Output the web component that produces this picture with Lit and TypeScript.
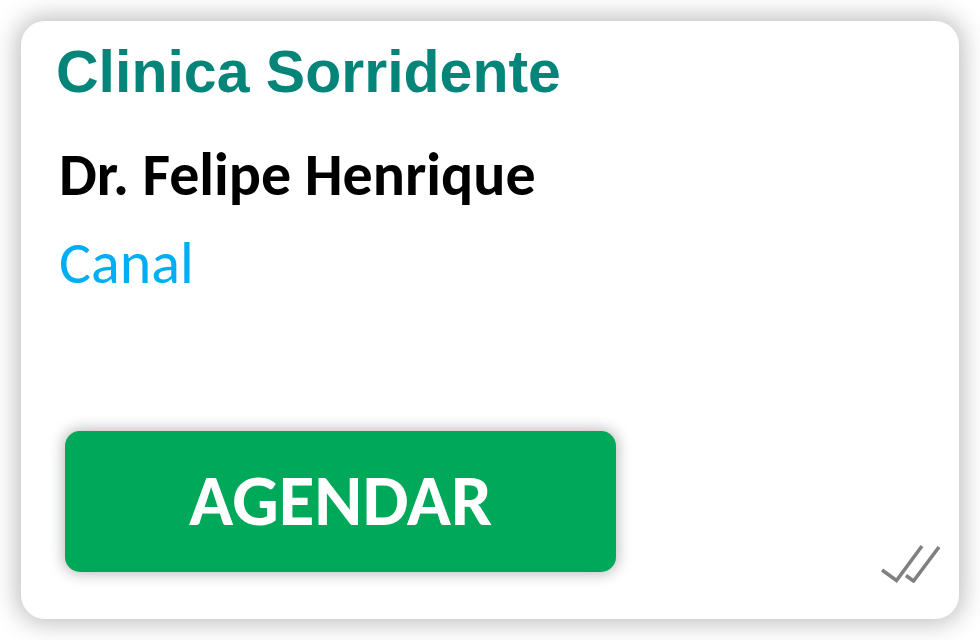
import { LitElement, html, css } from "lit";
import { customElement } from "lit/decorators.js";

@customElement("app-root")
export class AppRoot extends LitElement {
  static styles = css`
    :host {
      display: flex;
      box-sizing: border-box;
      min-height: 100vh;
      padding: 21px;
      background: #fff;
    }
    .card {
      flex: 1;
      box-sizing: border-box;
      display: flex;
      flex-direction: column;
      align-items: flex-start;
      padding: 19px 18px 36px 35px;
      border-radius: 24px;
      background: #fff;
      box-shadow: 0 0 24px 4px rgba(30, 34, 40, 0.3);
    }
    h1 {
      margin: 0 0 35px;
      font: bold 59px/64px "Liberation Sans", Arial, sans-serif;
      color: #05857a;
    }
    h2 {
      margin: 0 0 16px;
      padding-left: 3px;
      font: bold 60px/72px Carlito, Lato, sans-serif;
      color: #000;
    }
    a {
      padding-left: 3px;
      font: 60px/72px Carlito, Lato, sans-serif;
      color: #00aef3;
      text-decoration: none;
    }
    .footer {
      align-self: stretch;
      display: flex;
      justify-content: space-between;
      align-items: flex-end;
      margin-top: auto;
      padding-left: 9px;
    }
    button {
      width: 551px;
      height: 141px;
      margin: 0 0 11px;
      padding: 0 0 4px;
      border: 0;
      border-radius: 15px;
      background: #00a859;
      color: #fff;
      font: bold 73px/80px Carlito, Lato, sans-serif;
      box-shadow: 0 0 14px 2px rgba(30, 34, 40, 0.3);
    }
    svg {
      display: block;
      width: 60px;
      height: 40px;
    }
  `;

  render() {
    return html`
      <main class="card">
        <h1>Clinica Sorridente</h1>
        <h2>Dr. Felipe Henrique</h2>
        <a href="#canal">Canal</a>
        <div class="footer">
          <button type="button">AGENDAR</button>
          <svg viewBox="0 0 60 40" fill="none" stroke="#808080" stroke-width="3.6" role="img" aria-label="Entregue">
            <path d="M1 27 L15.500 37.500 L41 3 M25 32.500 L32.500 38 L58 4" />
          </svg>
        </div>
      </main>
    `;
  }
}
